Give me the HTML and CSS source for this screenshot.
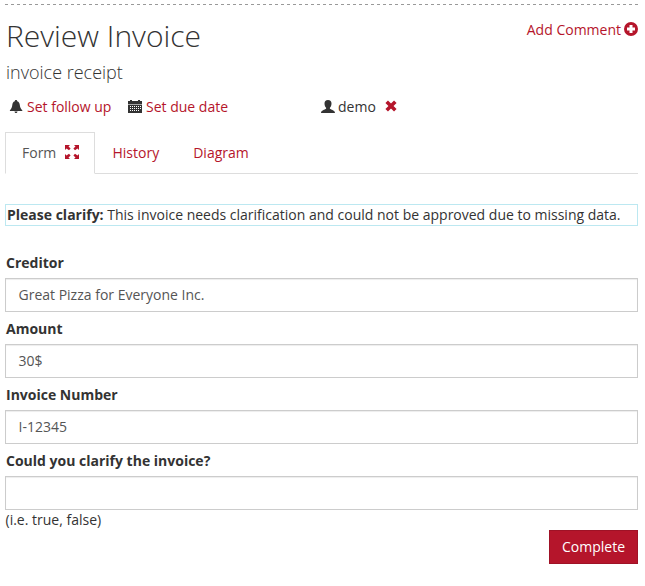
FILE: index.html
```html
<!DOCTYPE html>
<html lang="en">
<head>
<meta charset="utf-8">
<title>Review Invoice</title>
<link rel="stylesheet" href="styles.css">
</head>
<body>
<main class="task">
  <header class="head">
    <h2 class="title">Review Invoice</h2>
    <a class="comment">Add Comment <svg class="plus" viewBox="0 0 14 14"><path fill="currentColor" fill-rule="evenodd" d="M7 0a7 7 0 1 0 0 14A7 7 0 0 0 7 0zM5.500 3h3v2.500H11v3H8.500V11h-3V8.500H3v-3h2.500z"/></svg></a>
  </header>
  <h4 class="subtitle">invoice receipt</h4>
  <div class="meta">
    <span class="item follow"><svg class="icon" viewBox="0 0 14 14"><path d="M7 0c.8 0 1.200.5 1.200 1.200C10 1.700 10.600 3.200 10.800 5c.3 2.600 1 3.900 2.500 5.200v.9H.9v-.9C2.300 8.900 3 7.600 3.300 5c.2-1.800.7-3.300 2.500-3.800C5.800.5 6.200 0 7 0zM5.500 11.500h3c0 .9-.6 1.500-1.500 1.500s-1.500-.6-1.500-1.500z"/></svg><a>Set follow up</a></span>
    <span class="item due"><svg class="icon" viewBox="0 0 14 14"><path fill-rule="evenodd" d="M0 1H2V0h2v1h6V0h2v1h2v3H0zM0 5h14v8H0zM2 6v1h1V6zM4 6v1h1V6zM6 6v1h1V6zM8 6v1h1V6zM10 6v1h1V6zM2 8v1h1V8zM4 8v1h1V8zM6 8v1h1V8zM8 8v1h1V8zM10 8v1h1V8zM2 10v1h1v-1zM4 10v1h1v-1zM6 10v1h1v-1zM8 10v1h1v-1zM10 10v1h1v-1zM12 6v1h1V6zM12 8v1h1V8z"/><path fill="#aaa" d="M0 4h14v1H0z"/></svg><a>Set due date</a></span>
    <span class="item user"><svg class="icon" viewBox="0 0 14 14"><path d="M7 0c2.400 0 3.500 1.400 3.500 3.500 0 1.800-.7 3.300-1.600 4.200v1.100c1.200.9 5.100 1.500 5.100 4.200H0c0-2.700 3.900-3.300 5.100-4.200V7.700C4.200 6.800 3.500 5.300 3.500 3.500 3.500 1.400 4.600 0 7 0z"/></svg><span>demo</span><svg class="cross" viewBox="0 0 12 12"><path d="M1.700 1.700l8.600 8.600M10.300 1.700l-8.600 8.600"/></svg></span>
  </div>
  <nav class="tabs">
    <a class="tab active">Form<svg class="full" viewBox="0 0 14 14"><path fill="currentColor" d="M0 0h5L3.500 1.500 5.600 3.600 4 5.200 1.500 3.500 0 5zM14 0v5l-1.500-1.500L10 5.200 8.400 3.600l2.100-2.100L9 0zM0 14V9l1.500 1.500L4 8.800l1.600 1.600-2.100 2.100L5 14zM14 14H9l1.500-1.500-2.100-2.100L10 8.800l2.500 1.700L14 9z"/></svg></a>
    <a class="tab">History</a>
    <a class="tab">Diagram</a>
  </nav>
  <p class="notice"><b>Please clarify:</b> This invoice needs clarification and could not be approved due to missing data.</p>
  <form>
    <label>Creditor</label>
    <div class="input">Great Pizza for Everyone Inc.</div>
    <label>Amount</label>
    <div class="input">30$</div>
    <label>Invoice Number</label>
    <div class="input">I-12345</div>
    <label>Could you clarify the invoice?</label>
    <div class="input last"></div>
    <div class="help">(i.e. true, false)</div>
    <div class="actions"><button type="button">Complete</button></div>
  </form>
</main>
</body>
</html>
```
FILE: styles.css
```css
* { box-sizing: border-box; }
body {
  margin: 0;
  background: #fff;
  color: #333;
  font: 14px/20px "Open Sans", sans-serif;
}
.task {
  width: 633px;
  margin: 4px 0 0 5px;
  padding-top: 1px;
  background: repeating-linear-gradient(90deg, #999 0 3px, transparent 3px 6px) 0 0 / 100% 1px no-repeat;
}
h2, h4, p { margin: 0; }
a { color: #b5152b; }
svg { display: block; flex: none; }
.head {
  display: flex;
  justify-content: space-between;
  height: 57px;
  padding-top: 15px;
}
.title { margin: -1px 0 0 1px; font-size: 30px; line-height: 33px; font-weight: 300; }
.comment { display: flex; gap: 3px; }
.plus { width: 14px; height: 14px; margin-top: 2px; }
.subtitle { padding-left: 1px; font-size: 18px; line-height: 20px; font-weight: 300; }
.meta { display: flex; height: 35px; margin-top: 15px; }
.item { display: flex; }
.follow { width: 118px; padding-left: 4px; }
.due { width: 198px; padding-left: 5px; }
.icon { width: 14px; height: 14px; margin: 3px 4px 0 0; fill: #333; }
.user .icon { margin-right: 3px; }
.cross { width: 12px; height: 12px; margin: 3px 0 0 9px; stroke: #b5152b; stroke-width: 3.6; }
.tabs {
  display: flex;
  gap: 2px;
  height: 42px;
  border-bottom: 1px solid #ddd;
}
.tab { height: 42px; padding: 10px 14.5px; border: 1px solid transparent; }
.tab + .tab + .tab { margin-left: 1px; }
.tab.active {
  display: flex;
  width: 90px;
  padding-left: 16px;
  background: #fff;
  color: #555;
  border-color: #ddd #ddd #fff;
}
.full { width: 14px; height: 14px; margin: 2px 0 0 9px; color: #b5152b; }
.notice {
  height: 22px;
  margin: 30px 0 27px;
  padding: 0 1px;
  border: 1px solid #bce8f1;
  white-space: nowrap;
}
label { display: block; margin: 0 0 5px 1px; font-weight: 700; }
.input {
  height: 34px;
  margin-bottom: 7px;
  padding: 6px 12.5px;
  border: 1px solid #ccc;
  box-shadow: inset 0 1px 1px rgba(0, 0, 0, .075);
  color: #555;
}
.input.last { margin-bottom: 0; }
.help { padding-left: .5px; }
.actions { display: flex; justify-content: flex-end; }
button {
  width: 89px;
  height: 34px;
  padding: 0;
  border: 1px solid #9f1226;
  background: #b5152b;
  color: #fff;
  font: inherit;
}
```
